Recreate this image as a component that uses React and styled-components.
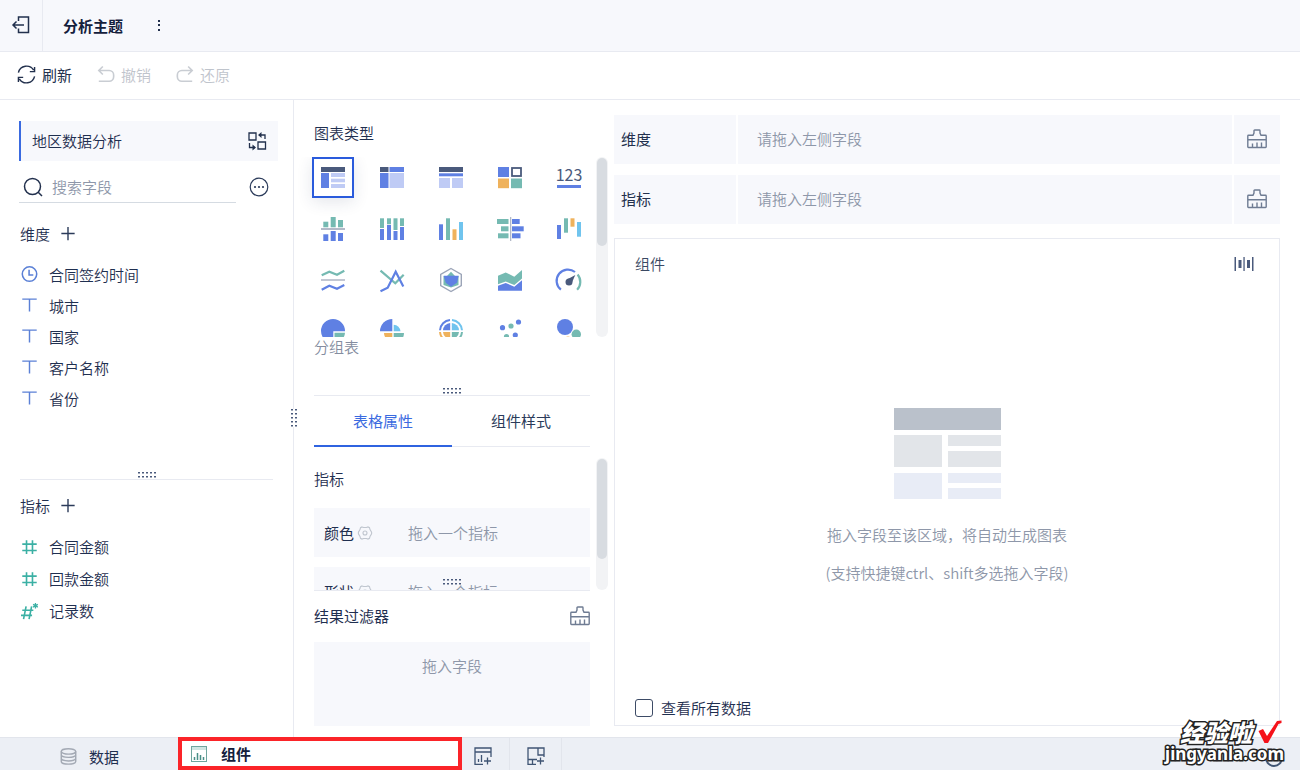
import { useState } from 'react';
import styled, { createGlobalStyle } from 'styled-components';

const GlobalStyle = createGlobalStyle`
    * {
        box-sizing: border-box;
    }

    body {
        margin: 0;
        background: #fff;
        color: #1f2f50;
        font-family: "Noto Sans CJK SC", "Noto Sans", sans-serif;
        font-size: 15px;
        font-weight: 350;
        line-height: 20px;
    }

    button, input {
        font: inherit;
        color: inherit;
    }

    button {
        padding: 0;
        border: 0;
        background: none;
        cursor: pointer;
    }

    svg {
        display: block;
        flex: none;
        overflow: visible;
    }
`;

const BLUE = '#5f80e3';
const LIGHT = '#bfcbf5';
const DARK = '#4a5a7c';
const TEAL = '#75bab2';
const ORANGE = '#efb25c';
const SKY = '#70c4ee';
const GREY = '#b3b9c8';

/* ---------- layout ---------- */

const Page = styled.div`
    display: flex;
    flex-direction: column;
    min-height: 100vh;
    position: relative;
    overflow: hidden;
`;

const Header = styled.header`
    display: flex;
    height: 52px;
    background: #f7f8fc;
    border-bottom: 1px solid #e8eaf1;
`;

const BackButton = styled.button`
    display: flex;
    align-items: center;
    justify-content: center;
    width: 43px;
    padding-bottom: 2px;
    border-right: 1px solid #e8eaf1;
`;

const Title = styled.h1`
    margin: 0 34px 0 20px;
    font-size: 15px;
    font-weight: 700;
    line-height: 52px;
    color: #14203c;
`;

const Toolbar = styled.div`
    display: flex;
    gap: 25px;
    height: 48px;
    padding: 0 0 2px 17px;
    border-bottom: 1px solid #e8eaf1;
`;

const ToolButton = styled.button`
    display: flex;
    align-items: center;
    gap: 6px;
    font-weight: 400;
    color: #22304d;

    &:disabled {
        font-weight: 350;
        color: #bfc4cc;
    }
`;

const Main = styled.main`
    display: flex;
    flex: 1;
`;

const FieldColumn = styled.aside`
    display: flex;
    flex-direction: column;
    position: relative;
    width: 294px;
    padding: 21px 15px 0 19px;
    border-right: 1px solid #e8eaf1;
`;

const SettingsColumn = styled.section`
    display: flex;
    flex-direction: column;
    width: 320px;
    padding: 23px 24px 11px 20px;
`;

const CanvasColumn = styled.section`
    display: flex;
    flex-direction: column;
    flex: 1;
    padding: 15px 20px 11px 0;
`;

/* ---------- field column ---------- */

const Subject = styled.button`
    display: flex;
    align-items: center;
    justify-content: space-between;
    height: 40px;
    padding: 0 11px;
    border-left: 2px solid #3a6ae0;
    background: #f7f8fc;
`;

const SearchRow = styled.div`
    display: flex;
    align-items: center;
    gap: 13px;
    padding-top: 10px;
`;

const SearchBox = styled.label`
    display: flex;
    align-items: center;
    gap: 9px;
    width: 217px;
    height: 32px;
    padding: 0 5px 0 4px;
    border-bottom: 1px solid #d5dbe2;
`;

const SearchInput = styled.input`
    width: 150px;
    padding: 0;
    border: 0;
    outline: 0;
    background: none;

    &::placeholder {
        color: #8e97a9;
        opacity: 1;
    }
`;

const GroupHead = styled.div`
    display: flex;
    align-items: center;
    gap: 11px;
    padding-left: 1px;
    margin: ${(p) => p.$margin};
`;

const GroupTitle = styled.h2`
    margin: 0;
    font-size: 15px;
    font-weight: 350;
    line-height: 20px;
`;

const FieldList = styled.ul`
    margin: 0;
    padding: 0;
    list-style: none;
    min-height: ${(p) => p.$minHeight || 0};
`;

const FieldItem = styled.li`
    display: flex;
    align-items: center;
    gap: 11px;
    height: ${(p) => p.$height};
    padding-left: 2px;
`;

const GripRow = styled.div`
    display: flex;
    justify-content: center;
    height: 8px;
    margin: ${(p) => p.$margin || 0};
    border-bottom: 1px solid #e8eaf1;
`;

const SideGrip = styled.div`
    position: absolute;
    top: 309px;
    right: -4px;
    background: #fff;
`;

/* ---------- settings column ---------- */

const ScrollBox = styled.div`
    position: relative;
    margin-top: ${(p) => p.$top};
`;

const ChartClip = styled.div`
    height: 180px;
    margin-left: -20px;
    padding-left: 18px;
    overflow: hidden;
`;

const ChartGrid = styled.div`
    display: grid;
    grid-template-columns: repeat(5, 42px);
    grid-auto-rows: 41px;
    gap: 10px 17px;
`;

const ChartButton = styled.button`
    display: flex;
    align-items: center;
    justify-content: center;
    border: 2px solid ${(p) => (p.$active ? '#2a5bdc' : 'transparent')};
    box-shadow: ${(p) => (p.$active ? '0 4px 16px rgba(30, 50, 90, 0.12)' : 'none')};
`;

const Track = styled.div`
    position: absolute;
    top: 0;
    right: -18px;
    width: 12px;
    height: 100%;
    padding: 1px;
    border-radius: 6px;
    background: #f2f3f5;
`;

const Thumb = styled.div`
    height: ${(p) => p.$height};
    border-radius: 5px;
    background: #d8dce1;
`;

const ChartName = styled.p`
    margin: 0;
    padding-bottom: 31px;
    color: #848da0;
`;

const Tabs = styled.div`
    display: grid;
    grid-template-columns: 1fr 1fr;
    border-bottom: 1px solid #e8eaf1;
`;

const Tab = styled.button`
    height: 51px;
    margin-bottom: -1px;
    border-bottom: 2px solid ${(p) => (p.$active ? '#2f63e0' : 'transparent')};
    font-weight: 400;
    color: ${(p) => (p.$active ? '#3a6ae0' : '#2b3b5a')};
`;

const PropClip = styled.div`
    display: flex;
    flex-direction: column;
    gap: 10px;
    height: 132px;
    padding-top: 11px;
    overflow: hidden;
`;

const PropTitle = styled(GroupTitle)`
    margin-bottom: 9px;
`;

const PropRow = styled.div`
    display: flex;
    flex: none;
    align-items: center;
    height: 49px;
    padding-left: 10px;
    background: #f7f8fc;
`;

const PropName = styled.span`
    display: flex;
    align-items: center;
    gap: 4px;
    width: 84px;
    font-weight: 400;
`;

const Hint = styled.span`
    color: #8e97a9;
`;

const OverGrip = styled.div`
    position: absolute;
    bottom: 5px;
    left: 0;
    right: 0;
    display: flex;
    justify-content: center;
`;

const FilterHead = styled.div`
    display: flex;
    align-items: center;
    justify-content: space-between;
    height: 52px;
    padding-bottom: 2px;
    border-top: 1px solid #e8eaf1;
    font-weight: 400;
`;

const FilterDrop = styled.div`
    flex: 1;
    min-height: 84px;
    padding-top: 14px;
    background: #f7f8fc;
    color: #8e97a9;
    text-align: center;
`;

/* ---------- canvas column ---------- */

const DropRow = styled.div`
    display: grid;
    grid-template-columns: 122px 1fr 46px;
    gap: 2px;
    height: 49px;
    margin-bottom: 11px;
`;

const DropCell = styled.div`
    display: flex;
    align-items: center;
    padding: 0 0 2px ${(p) => p.$pad};
    background: #f7f8fc;
    color: ${(p) => (p.$muted ? '#8e97a9' : '#22304d')};
    font-weight: ${(p) => (p.$muted ? 350 : 400)};
`;

const ClearButton = styled.button`
    display: flex;
    align-items: center;
    justify-content: center;
    padding-bottom: 2px;
    background: #f7f8fc;
`;

const Preview = styled.div`
    display: flex;
    flex-direction: column;
    flex: 1;
    margin-top: 3px;
    padding: 15px 20px 7px 20px;
    border: 1px solid #e8eaf1;
`;

const PreviewHead = styled.div`
    display: flex;
    align-items: center;
    justify-content: space-between;
    padding-right: 5px;
    color: #3a4963;
`;

const Empty = styled.div`
    display: flex;
    flex: 1;
    flex-direction: column;
    align-items: center;
    justify-content: center;
    gap: 18px;
    padding-top: 18px;
    color: #8e97a9;
    text-align: center;

    p {
        margin: 0;
    }

    svg {
        margin-bottom: 7px;
    }
`;

const CheckLabel = styled.label`
    display: flex;
    align-items: center;
    gap: 8px;
`;

const Checkbox = styled.input`
    appearance: none;
    width: 18px;
    height: 18px;
    margin: 0;
    border: 1px solid #3d4b66;
    border-radius: 3px;

    &:checked {
        background: #3a6ae0;
    }
`;

/* ---------- bottom tabs ---------- */

const Footer = styled.footer`
    display: flex;
    height: 33px;
    background: #eceff5;
`;

const DataTab = styled.button`
    display: flex;
    align-items: center;
    gap: 12px;
    width: 178px;
    padding: 5px 0 0 60px;
    border-top: 1px solid #e2e5ec;
    font-weight: 400;
`;

const WidgetTab = styled.button`
    display: flex;
    align-items: center;
    gap: 14px;
    width: 284px;
    padding-left: 9px;
    border: 4px solid #fb2429;
    background: #fff;
    font-weight: 700;
    color: #14203c;
`;

const AddTab = styled.button`
    display: flex;
    align-items: center;
    width: ${(p) => p.$width};
    padding: 4px 0 0 ${(p) => p.$pad};
    border-top: 1px solid #e2e5ec;
    border-right: 1px solid #e2e5ec;
`;

const FooterRest = styled.div`
    flex: 1;
    border-top: 1px solid #e2e5ec;
`;

const Help = styled.button`
    position: absolute;
    right: 17px;
    bottom: 3px;
    width: 18px;
    height: 18px;
    border: 2px solid #3f5473;
    border-radius: 50%;
`;

const Watermark = styled.div`
    position: absolute;
    right: 16px;
    bottom: 6px;
    color: #fff;
    font-weight: 900;
    -webkit-text-stroke: 3px #222;
    paint-order: stroke fill;
    pointer-events: none;
`;

const WatermarkTop = styled.div`
    display: flex;
    align-items: center;
    gap: 6px;
    padding-left: 15px;
    font-size: 24px;
    font-style: italic;
    line-height: 24px;
`;

const WatermarkUrl = styled.div`
    font-family: "Noto Sans", sans-serif;
    font-size: 17px;
    font-weight: 700;
    line-height: 20px;
`;

/* ---------- icons ---------- */

function Line({ size = 20, color = '#2b3b5a', width = 1.3, children }) {
    return (
        <svg width={size} height={size} viewBox="0 0 20 20" fill="none" stroke={color} strokeWidth={width} aria-hidden="true">
            {children}
        </svg>
    );
}

function BackIcon() {
    return (
        <Line color="#22304d" width={1.5}>
            <path d="M7.500 6V2H17.500v15.500H7.500v-4M13 10H2M5.500 6.500L2 10l3.500 3.500" />
        </Line>
    );
}

function DotsIcon() {
    return (
        <svg width="4" height="14" viewBox="0 0 4 14" fill="#22304d" aria-hidden="true">
            <rect x="1" y="1" width="2" height="2" />
            <rect x="1" y="5" width="2" height="2" />
            <rect x="1" y="10" width="2" height="2" />
        </svg>
    );
}

function RefreshIcon() {
    return (
        <Line size={19} color="#22304d" width={1.5}>
            <path d="M1.500 8A8.700 8.700 0 0 1 17.500 5.500M18.500 12A8.700 8.700 0 0 1 2.500 14.500M18.500 2v5h-5M1.500 18v-5h5" />
        </Line>
    );
}

function UndoIcon({ flip }) {
    return (
        <Line size={18} color="#c9cdd3" width={1.8}>
            <path
                transform={flip ? 'matrix(-1 0 0 1 20 0)' : undefined}
                d="M6.500 0.500L2 5l4.500 4.500M2 5h11.500a5 5 0 0 1 5 5v2a5 5 0 0 1-5 5H2"
            />
        </Line>
    );
}

function SwitchIcon() {
    return (
        <Line color="#22304d" width={1.3}>
            <path d="M2 2h7v7H2zM11 11h7.500v7H11zM12 4h6v4M2.500 12v4.500H8" />
            <path d="M14.500 1v6L11 4zM5.500 13.500v6L9 16.500z" fill="#22304d" stroke="none" />
        </Line>
    );
}

function SearchIcon() {
    return (
        <Line color="#22304d" width={1.5}>
            <circle cx="9.500" cy="9.500" r="8" />
            <path d="M15.200 15.200L19 19" />
        </Line>
    );
}

function MoreIcon() {
    return (
        <Line width={1.2}>
            <circle cx="10" cy="10" r="8.800" />
            <g fill="#2b3b5a" stroke="none">
                <circle cx="6" cy="10" r="1.100" />
                <circle cx="10" cy="10" r="1.100" />
                <circle cx="14" cy="10" r="1.100" />
            </g>
        </Line>
    );
}

function PlusIcon() {
    return (
        <Line size={14} width={2}>
            <path d="M10 0v19M0.500 9.300h19" />
        </Line>
    );
}

function FieldIcon({ type }) {
    if (type === 'time') {
        return (
            <Line size={17} color="#5b80d6" width={1.8}>
                <circle cx="10" cy="9.500" r="8.500" />
                <path d="M9.500 4.500v6h5" />
            </Line>
        );
    }
    if (type === 'text') {
        return (
            <Line size={17} color="#5b80d6" width={1.7}>
                <path d="M1.500 2.500h17M10 2.500V17" />
            </Line>
        );
    }
    if (type === 'count') {
        return (
            <Line size={17} color="#3bb0a4" width={1.900}>
                <path d="M6 4L3 19M12.500 4l-3 15M1.500 8.500h13M0 14.500h13" />
                <path d="M17 0v6.500M14.200 1.600l5.600 3.300M19.800 1.600l-5.600 3.300" strokeWidth="1.500" />
            </Line>
        );
    }
    return (
        <Line size={17} color="#3bb0a4" width={1.900}>
            <path d="M6.500 1.500v16M13.500 1.500v16M1.500 6h17M1.500 13.500h17" />
        </Line>
    );
}

function Grip({ vertical }) {
    const steps = [0, 4, 8, 12, 16];
    return (
        <svg width={vertical ? 6 : 18} height={vertical ? 18 : 6} fill="#4a5a7c" aria-hidden="true">
            {steps.map((n) => (
                <g key={n}>
                    <rect x={vertical ? 0 : n} y={vertical ? n : 0} width="2" height="1.500" />
                    <rect x={vertical ? 4 : n} y={vertical ? n : 4} width="2" height="1.500" />
                </g>
            ))}
        </svg>
    );
}

function BrushIcon() {
    return (
        <Line color="#6f7c93" width={1.4}>
            <path d="M1.500 18.500q-0.700 0-0.700-0.700V7q0-0.700 0.700-0.700H6L7 4V1.700q0-0.700 0.700-0.700h4.600q0.700 0 0.700 0.700V4l1 2.300h4.500q0.700 0 0.700 0.700v10.800q0 0.700-0.700 0.700zM1 10.700h18M5.500 18v-3.500M10 18v-4.500M14.500 18v-4.500" />
        </Line>
    );
}

function GearIcon() {
    return (
        <svg width="14" height="14" viewBox="0 0 14 14" fill="none" stroke="#c0c6cf" strokeWidth="1.100" aria-hidden="true">
            <path d="M4 0.900l1.600 0.600h2.800l1.600-0.600 1.500 0.800 0.500 1.900 1.600 2.600v1.600l-1.600 2.600-0.500 1.900-1.500 0.800-1.600-0.600H5.600L4 13.100l-1.500-0.800L2 10.400 0.400 7.800V6.200L2 3.600l0.500-1.900z" />
            <circle cx="7" cy="7" r="2" />
        </svg>
    );
}

function FitIcon() {
    return (
        <svg width="20" height="14" viewBox="0 0 20 14" fill="#4a5a7c" aria-hidden="true">
            <rect x="0.500" width="1.500" height="14" />
            <rect x="4.500" y="3" width="3" height="8" />
            <rect x="9.400" width="1.300" height="14" />
            <rect x="13" y="3" width="3" height="8" />
            <rect x="18" width="1.500" height="14" />
        </svg>
    );
}

function EmptyImage() {
    return (
        <svg width="107" height="92" viewBox="0 0 107 92" aria-hidden="true">
            <rect width="107" height="22" fill="#bac1cb" />
            <rect y="27" width="48" height="32" fill="#e2e5e9" />
            <rect x="54" y="27" width="53" height="11" fill="#e2e5e9" />
            <rect x="54" y="43" width="53" height="16" fill="#e2e5e9" />
            <rect y="65" width="48" height="26" fill="#e8ecf6" />
            <rect x="54" y="65" width="53" height="10" fill="#e8ecf6" />
            <rect x="54" y="80" width="53" height="11" fill="#e8ecf6" />
        </svg>
    );
}

function DataIcon() {
    return (
        <Line size={17} color="#a3a9b4" width={1.700}>
            <ellipse cx="10" cy="4" rx="8.500" ry="3.200" />
            <path d="M1.500 4v12c0 4 17 4 17 0V4M1.500 8c0 4 17 4 17 0M1.500 12.200c0 4 17 4 17 0" />
        </Line>
    );
}

function WidgetIcon() {
    return (
        <svg width="16" height="16" viewBox="0 0 16 16" aria-hidden="true">
            <rect x="0.500" y="0.500" width="15" height="15" fill="#fff" stroke="#6fa59e" />
            <rect x="1" y="1" width="14" height="3" fill="#cfe5e2" />
            <path d="M3.500 14v-3M6.500 14V7M9.500 14V9M12.500 14v-3" stroke="#4a8f87" strokeWidth="1.500" />
        </svg>
    );
}

function AddWidgetIcon() {
    return (
        <svg width="18" height="18" viewBox="0 0 18 18" fill="none" stroke="#3f5473" strokeWidth="1.300" aria-hidden="true">
            <path d="M9 17.300H1V1h16v9M1 5h16M4.500 15v-3M7.500 15V8M13.500 10.500v7M10 14h7" />
        </svg>
    );
}

function AddBoardIcon() {
    return (
        <svg width="18" height="18" viewBox="0 0 18 18" fill="none" stroke="#3f5473" strokeWidth="1.300" aria-hidden="true">
            <path d="M9 17.300H1V1h16v9M11 1v7h6M1 12.500h9M5.500 12.500v5M13.500 10.500v7M10 14h7" />
        </svg>
    );
}

// [x, y, width, height, fill] for every chart icon that is made only of blocks
const blockIcons = {
    group: [[0, 1, 24, 5, DARK], [0, 7, 8, 15, BLUE], [10, 7, 14, 4, LIGHT], [10, 12.7, 14, 3.600, LIGHT], [10, 18, 14, 4, LIGHT]],
    cross: [[0, 1, 8.500, 5, DARK], [9.500, 1, 14.500, 5, BLUE], [0, 7, 8.500, 15, BLUE], [9.500, 7, 14.500, 15, LIGHT]],
    detail: [[0, 1, 24, 5, DARK], [0, 7.300, 24, 3, BLUE], [0, 12, 11, 10, LIGHT], [13, 12, 11, 10, LIGHT]],
    contrast: [[2.300, 4.700, 5, 5.600, TEAL], [9.700, 0, 5, 10.300, TEAL], [17, 3, 5, 7.300, TEAL], [0, 11, 24, 2, GREY],
        [2.300, 17.300, 5, 6.700, BLUE], [9.700, 14, 5, 10, BLUE], [17, 16, 5, 8, BLUE]],
    stack: [[0, 1.300, 4, 9.700, TEAL], [7, 1.300, 4, 6, TEAL], [13.500, 1.300, 4, 11.700, TEAL], [20, 1.300, 4, 7.700, TEAL],
        [0, 12, 4, 11, BLUE], [7, 8, 4, 15, BLUE], [13.500, 14, 4, 9, BLUE], [20, 10, 4, 13, BLUE]],
    column: [[0, 7.300, 4, 15.700, BLUE], [7, 1.300, 4, 21.700, TEAL], [13.500, 12.300, 4, 10.700, ORANGE], [20, 5, 4, 18, SKY]],
    bar: [[-1, 2, 11.500, 5, TEAL], [3, 9.300, 7.500, 5, TEAL], [0, 16.300, 10.500, 5, TEAL], [12, 0, 1.300, 24, GREY],
        [14, 2, 7.700, 5, BLUE], [14, 9.300, 11.700, 5, BLUE], [14, 16.300, 8.500, 5, BLUE]],
    waterfall: [[0, 8, 4, 14, BLUE], [7, 1.300, 4, 14.400, TEAL], [13.500, 1.300, 4, 8.400, ORANGE], [20, 5, 4, 14.700, SKY]],
};

const drawnIcons = {
    color: (
        <>
            <rect y="1" width="11" height="10" fill={BLUE} />
            <rect x="14" y="2" width="9" height="8" fill="#fff" stroke={DARK} strokeWidth="1.800" />
            <rect y="12.500" width="11" height="9.700" fill={ORANGE} />
            <rect x="13" y="12.500" width="11" height="9.700" fill={TEAL} />
        </>
    ),
    kpi: (
        <>
            <text x="12" y="15" textAnchor="middle" fontFamily='"Noto Sans CJK SC", sans-serif' fontSize="16" fontWeight="400" fill={DARK}>
                123
            </text>
            <rect y="19" width="24" height="3" fill={BLUE} />
        </>
    ),
    multiLine: (
        <g fill="none" strokeWidth="2.200">
            <path d="M0.700 7.300L8.300 3.700 16 6.700 23.300 2.700" stroke={TEAL} />
            <path d="M0 12h24" stroke={GREY} strokeWidth="1.600" />
            <path d="M0.700 21.700L8.300 17.700 16 20.700 23.300 17" stroke={BLUE} />
        </g>
    ),
    line: (
        <g fill="none" strokeWidth="2.200">
            <path d="M0.500 2.700L15.300 15.300 23.700 6.700" stroke={TEAL} />
            <path d="M0.500 23.300L7.700 19.700 15.700 3.700 23.300 18.500" stroke={BLUE} />
        </g>
    ),
    radar: (
        <>
            <path d="M12 0.500L22.300 6.300V17.700L12 23.500 1.700 17.700V6.300z" fill="none" stroke="#9ca5b8" strokeWidth="1.400" />
            <path d="M12 3.700L16 8h3.500v9L12 19.500 4.500 17V8H8z" fill={TEAL} />
            <path d="M4.700 7.700h15l-1.700 7-6 4-5.300-4z" fill={BLUE} />
        </>
    ),
    area: (
        <>
            <path d="M0 7.700L7.700 4.500 16.300 8.700 24 2v8.500L16.300 17 7.700 13.500 0 16.300z" fill={TEAL} />
            <path d="M0 17.700L7.700 15 16.300 18.700 24 12.300V22.700H0z" fill={BLUE} />
        </>
    ),
    gauge: (
        <>
            <path d="M3.900 21.700A11.300 11.300 0 0 1 18 4" fill="none" stroke={BLUE} strokeWidth="2.200" />
            <path d="M20.600 6.500A11.300 11.300 0 0 1 20.100 21.700" fill="none" stroke={TEAL} strokeWidth="2.200" />
            <circle cx="12" cy="14" r="3.500" fill={DARK} />
            <path d="M10 11.500L18.300 7 14.500 15.500z" fill={DARK} />
        </>
    ),
    pie: (
        <>
            <path d="M12.300 12.300H24A12 12 0 1 0 12.300 24z" fill={BLUE} />
            <path d="M13.500 13.700H24A11 11 0 0 1 13.500 24z" fill={TEAL} />
        </>
    ),
    rose: (
        <>
            <path d="M12.300 12.300H0A12.300 12.300 0 0 1 12.300 0z" fill={BLUE} />
            <path d="M13.700 12.300V5.700a7 7 0 0 1 6.800 6.600z" fill={SKY} />
            <path d="M12.300 14H4a8.300 8.300 0 0 0 8.300 8.300z" fill={ORANGE} />
            <path d="M13.700 14H24a10.300 10.300 0 0 1-10.300 10.300z" fill={TEAL} />
        </>
    ),
    ring: (
        <>
            <path d="M11.200 11.300H4A7.700 7.700 0 0 1 11.200 4z" fill={BLUE} />
            <path d="M12.800 11.300V4A7.700 7.700 0 0 1 20 11.300z" fill={SKY} />
            <path d="M11.200 13H4A7.700 7.700 0 0 0 11.200 20z" fill={ORANGE} />
            <path d="M12.800 13V20A7.700 7.700 0 0 0 20 13z" fill={TEAL} />
            <g fill="none" strokeWidth="2">
                <path d="M1 11.300A11 11 0 0 1 11 1" stroke={BLUE} />
                <path d="M13 1A11 11 0 0 1 23 11.300" stroke={SKY} />
                <path d="M1 13A11 11 0 0 0 11 23" stroke={ORANGE} />
                <path d="M23 13A11 11 0 0 1 13 23" stroke={TEAL} />
            </g>
        </>
    ),
    scatter: (
        <>
            <circle cx="4.500" cy="8.700" r="2.600" fill={BLUE} />
            <circle cx="13" cy="7" r="2.600" fill={TEAL} />
            <circle cx="20.500" cy="3" r="2.600" fill={BLUE} />
            <circle cx="8.500" cy="17.700" r="2.600" fill={TEAL} />
            <circle cx="17.300" cy="16" r="2.600" fill={BLUE} />
        </>
    ),
    bubble: (
        <>
            <circle cx="8" cy="8" r="8" fill={BLUE} />
            <circle cx="19.300" cy="15.300" r="4.700" fill={TEAL} />
            <circle cx="11" cy="21" r="3.500" fill={ORANGE} />
        </>
    ),
};

function ChartIcon({ name }) {
    return (
        <svg width="24" height="24" viewBox="0 0 24 24" aria-hidden="true">
            {blockIcons[name]
                ? blockIcons[name].map(([x, y, w, h, fill], i) => <rect key={i} x={x} y={y} width={w} height={h} fill={fill} />)
                : drawnIcons[name]}
        </svg>
    );
}

/* ---------- data ---------- */

const chartTypes = [
    'group', 'cross', 'detail', 'color', 'kpi',
    'contrast', 'stack', 'column', 'bar', 'waterfall',
    'multiLine', 'line', 'radar', 'area', 'gauge',
    'pie', 'rose', 'ring', 'scatter', 'bubble',
];

const dimensions = [
    { name: '合同签约时间', type: 'time' },
    { name: '城市', type: 'text' },
    { name: '国家', type: 'text' },
    { name: '客户名称', type: 'text' },
    { name: '省份', type: 'text' },
];

const metrics = [
    { name: '合同金额', type: 'number' },
    { name: '回款金额', type: 'number' },
    { name: '记录数', type: 'count' },
];

function FieldGroup({ title, fields, margin, itemHeight, minHeight }) {
    return (
        <>
            <GroupHead $margin={margin}>
                <GroupTitle>{title}</GroupTitle>
                <button type="button" aria-label={`添加${title}`}><PlusIcon /></button>
            </GroupHead>
            <FieldList $minHeight={minHeight}>
                {fields.map((field) => (
                    <FieldItem key={field.name} $height={itemHeight}>
                        <FieldIcon type={field.type} />
                        {field.name}
                    </FieldItem>
                ))}
            </FieldList>
        </>
    );
}

function ChartArea({ chart, onPick }) {
    return (
        <ScrollBox $top="14px">
            <ChartClip>
                <ChartGrid>
                    {chartTypes.map((name) => (
                        <ChartButton key={name} type="button" aria-label={name} $active={chart === name} onClick={() => onPick(name)}>
                            <ChartIcon name={name} />
                        </ChartButton>
                    ))}
                </ChartGrid>
            </ChartClip>
            <Track><Thumb $height="88px" /></Track>
        </ScrollBox>
    );
}

function PropArea() {
    return (
        <ScrollBox $top="11px">
            <PropClip>
                <PropTitle as="h3">指标</PropTitle>
                {['颜色', '形状'].map((name) => (
                    <PropRow key={name}>
                        <PropName>{name}<GearIcon /></PropName>
                        <Hint>拖入一个指标</Hint>
                    </PropRow>
                ))}
            </PropClip>
            <Track><Thumb $height="100px" /></Track>
            <OverGrip><Grip /></OverGrip>
        </ScrollBox>
    );
}

export default function App() {
    const [chart, setChart] = useState('group');
    const [tab, setTab] = useState('表格属性');

    return (
        <Page>
            <GlobalStyle />
            <Header>
                <BackButton type="button" aria-label="返回"><BackIcon /></BackButton>
                <Title>分析主题</Title>
                <button type="button" aria-label="更多"><DotsIcon /></button>
            </Header>
            <Toolbar>
                <ToolButton type="button"><RefreshIcon />刷新</ToolButton>
                <ToolButton type="button" disabled><UndoIcon />撤销</ToolButton>
                <ToolButton type="button" disabled><UndoIcon flip />还原</ToolButton>
            </Toolbar>

            <Main>
                <FieldColumn>
                    <Subject type="button">地区数据分析<SwitchIcon /></Subject>
                    <SearchRow>
                        <SearchBox>
                            <SearchIcon />
                            <SearchInput type="text" placeholder="搜索字段" aria-label="搜索字段" />
                        </SearchBox>
                        <button type="button" aria-label="字段选项"><MoreIcon /></button>
                    </SearchRow>
                    <FieldGroup title="维度" fields={dimensions} margin="21px 0 15px" itemHeight="31px" minHeight="213px" />
                    <GripRow $margin="0 5px 0 1px"><Grip /></GripRow>
                    <FieldGroup title="指标" fields={metrics} margin="16px 0 15px" itemHeight="32px" />
                    <SideGrip><Grip vertical /></SideGrip>
                </FieldColumn>

                <SettingsColumn>
                    <GroupTitle>图表类型</GroupTitle>
                    <ChartArea chart={chart} onPick={setChart} />
                    <ChartName>分组表</ChartName>
                    <GripRow><Grip /></GripRow>
                    <Tabs role="tablist">
                        {['表格属性', '组件样式'].map((name) => (
                            <Tab key={name} type="button" role="tab" aria-selected={tab === name} $active={tab === name} onClick={() => setTab(name)}>
                                {name}
                            </Tab>
                        ))}
                    </Tabs>
                    <PropArea />
                    <FilterHead>
                        结果过滤器
                        <button type="button" aria-label="清空过滤器"><BrushIcon /></button>
                    </FilterHead>
                    <FilterDrop>拖入字段</FilterDrop>
                </SettingsColumn>

                <CanvasColumn>
                    {['维度', '指标'].map((name) => (
                        <DropRow key={name}>
                            <DropCell $pad="7px">{name}</DropCell>
                            <DropCell $pad="19px" $muted>请拖入左侧字段</DropCell>
                            <ClearButton type="button" aria-label={`清空${name}`}><BrushIcon /></ClearButton>
                        </DropRow>
                    ))}
                    <Preview>
                        <PreviewHead>
                            组件
                            <button type="button" aria-label="自适应"><FitIcon /></button>
                        </PreviewHead>
                        <Empty>
                            <EmptyImage />
                            <p>拖入字段至该区域，将自动生成图表</p>
                            <p>(支持快捷键ctrl、shift多选拖入字段)</p>
                        </Empty>
                        <CheckLabel>
                            <Checkbox type="checkbox" />
                            查看所有数据
                        </CheckLabel>
                    </Preview>
                </CanvasColumn>
            </Main>

            <Footer>
                <DataTab type="button"><DataIcon />数据</DataTab>
                <WidgetTab type="button"><WidgetIcon />组件</WidgetTab>
                <AddTab type="button" $width="48px" $pad="12px" aria-label="添加组件"><AddWidgetIcon /></AddTab>
                <AddTab type="button" $width="52px" $pad="17px" aria-label="添加仪表板"><AddBoardIcon /></AddTab>
                <FooterRest />
            </Footer>
            <Help type="button" aria-label="帮助" />
            <Watermark>
                <WatermarkTop>
                    经验啦
                    <svg width="24" height="24" viewBox="0 0 24 24" fill="#f5121a" aria-hidden="true">
                        <path d="M0.500 11l4.500-2 4 7L19 1l4.500-0.500V3l-3 1L10 23H6.500z" />
                    </svg>
                </WatermarkTop>
                <WatermarkUrl>jingyanla.com</WatermarkUrl>
            </Watermark>
        </Page>
    );
}
